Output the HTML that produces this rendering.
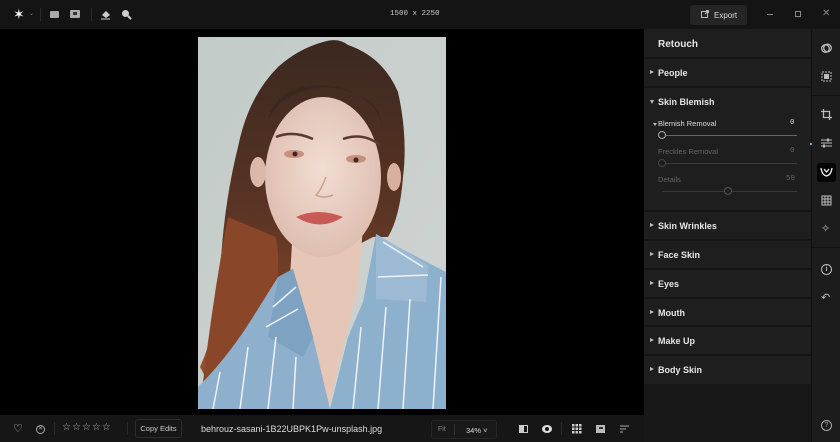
<!DOCTYPE html>
<html><head><meta charset="utf-8">
<style>
*{margin:0;padding:0;box-sizing:border-box}
body{width:840px;height:442px;background:#000;font-family:"Liberation Sans",sans-serif;position:relative;overflow:hidden;color:#ddd}
.top{position:absolute;left:0;top:0;width:840px;height:29px;background:#141414}
.bot{position:absolute;left:0;top:415px;width:644px;height:27px;background:#161616}
.panel{position:absolute;left:644px;top:29px;width:167px;height:413px;background:#181818}
.strip{position:absolute;left:811px;top:29px;width:29px;height:413px;background:#1c1c1c;border-left:1px solid #111}
.sec{position:absolute;left:0;width:167px;background:#1e1e1e;border-bottom:2px solid #151515}
.sec .t{position:absolute;left:14px;top:9px;font-size:9px;font-weight:bold;color:#e6e6e6}
.sec .a{position:absolute;left:6px;top:11px;width:0;height:0;border-left:4px solid #bbb;border-top:2.5px solid transparent;border-bottom:2.5px solid transparent}
.down{position:absolute;width:0;height:0;border-top:4px solid #bbb;border-left:2.5px solid transparent;border-right:2.5px solid transparent}
.lbl{position:absolute;font-size:7.5px}
.track{position:absolute;height:1px;background:#555}
.knob{position:absolute;width:8px;height:8px;border-radius:50%;border:1px solid #aaa;background:#1e1e1e}
.ic{position:absolute}
</style></head><body>
<div class="top">
 <div style="position:absolute;left:13px;top:7px;font-size:14px;color:#fff;line-height:14px">✶</div>
 <div style="position:absolute;left:29px;top:10px;font-size:6px;color:#888">⌄</div>
 <div style="position:absolute;left:40px;top:8px;width:1px;height:13px;background:#2a2a2a"></div>
 <div style="position:absolute;left:50px;top:11px;width:9px;height:7px;background:#aaa;border-radius:1px"></div>
 <div style="position:absolute;left:70px;top:10px;width:10px;height:8px;background:#aaa;border-radius:1px"><div style="position:absolute;left:3px;top:2px;width:4px;height:3px;background:#333"></div></div>
 <div style="position:absolute;left:91px;top:8px;width:1px;height:13px;background:#2a2a2a"></div>
 <svg class="ic" style="left:100px;top:9px" width="11" height="11"><path d="M2 6 L6 2 L10 6 L6 9 Z" fill="#ccc"/><path d="M1 10 H10" stroke="#ccc"/></svg>
 <svg class="ic" style="left:121px;top:9px" width="11" height="11"><circle cx="4.5" cy="4.5" r="3.5" fill="#ccc"/><path d="M7 7 L10 10" stroke="#ccc" stroke-width="2"/></svg>
 <div style="position:absolute;left:390px;top:10px;font-family:'Liberation Mono',monospace;font-size:7.5px;color:#ccc">1500 x 2250</div>
 <div style="position:absolute;left:690px;top:5px;width:57px;height:20px;background:#252525;border-radius:3px"></div>
 <svg class="ic" style="left:701px;top:10px" width="8" height="8"><rect x="0.5" y="1.5" width="6" height="6" fill="none" stroke="#bbb"/><path d="M4 4 L7.5 0.5 M5 0.5 H7.5 V3" stroke="#bbb" fill="none"/></svg>
 <div style="position:absolute;left:714px;top:11px;font-size:8px;color:#ddd">Export</div>
 <div style="position:absolute;left:767px;top:14px;width:6px;height:1px;background:#888"></div>
 <div style="position:absolute;left:795px;top:11px;width:6px;height:6px;border:1px solid #888"></div>
 <div style="position:absolute;left:822px;top:8px;font-size:10px;color:#888">✕</div>
</div>

<svg style="position:absolute;left:198px;top:37px" width="248" height="372" viewBox="0 0 248 372">
 <defs>
  <linearGradient id="bg" x1="0" y1="0" x2="1" y2="1"><stop offset="0" stop-color="#c2cbc8"/><stop offset="1" stop-color="#d0d4d2"/></linearGradient>
  <linearGradient id="hair" x1="0" y1="0" x2="0" y2="1"><stop offset="0" stop-color="#3a2820"/><stop offset="0.5" stop-color="#5a3424"/><stop offset="1" stop-color="#9a5030"/></linearGradient>
  <radialGradient id="skin" cx="0.5" cy="0.45" r="0.6"><stop offset="0" stop-color="#f2ddd2"/><stop offset="1" stop-color="#dcbcae"/></radialGradient>
 </defs>
 <rect width="248" height="372" fill="url(#bg)"/>
 <path d="M125 5 Q140 0 150 8 Q185 20 200 55 Q210 100 205 140 Q202 180 190 200 L175 200 L60 260 Q35 300 10 345 L2 330 Q20 290 22 240 Q25 170 40 110 Q50 60 80 30 Q100 12 125 5 Z" fill="url(#hair)"/>
 <path d="M30 180 Q15 260 5 345 Q40 320 70 280 Q85 240 78 200 Z" fill="#8a4628"/>
 <path d="M95 190 L92 240 L130 372 L160 250 L165 190 Z" fill="#e6c6b6"/>
 <ellipse cx="125" cy="140" rx="58" ry="80" fill="url(#skin)"/>
 <ellipse cx="60" cy="135" rx="8" ry="15" fill="#dcb8a8"/>
 <ellipse cx="196" cy="140" rx="7" ry="14" fill="#d8b0a0"/>
 <path d="M70 85 Q80 55 125 50 Q175 52 185 90 Q180 65 160 58 Q125 40 90 55 Q72 68 70 85Z" fill="#3a2820"/>
 <path d="M78 100 Q95 93 115 102" stroke="#5a3a30" stroke-width="2.5" fill="none"/>
 <path d="M145 102 Q165 95 182 108" stroke="#5a3a30" stroke-width="2.5" fill="none"/>
 <ellipse cx="96" cy="117" rx="10" ry="4" fill="#c8907e"/><circle cx="97" cy="117" r="2.5" fill="#3a2a22"/>
 <ellipse cx="158" cy="122" rx="10" ry="4" fill="#c8907e"/><circle cx="158" cy="123" r="2.5" fill="#3a2a22"/>
 <path d="M128 140 Q122 155 118 158 Q125 162 135 158" stroke="#c8a090" stroke-width="1.5" fill="none"/>
 <path d="M98 180 Q120 170 145 180 Q122 195 98 180Z" fill="#c85a58"/>
 <path d="M0 372 L0 350 Q30 320 55 280 L80 240 L95 232 L115 300 L132 372 Z" fill="#8fb0cc"/>
 <path d="M80 240 L95 232 L115 300 L105 320 L70 300 Z" fill="#7ea2c2"/>
 <path d="M132 372 L150 300 L165 265 L178 197 L200 210 L248 235 L248 372 Z" fill="#8db0cc"/>
 <path d="M178 197 L230 228 L228 265 L178 262 Z" fill="#9cbad4"/>
 <g stroke="#eef2f6" stroke-width="1.5" fill="none">
  <path d="M15 372 L22 335"/><path d="M42 372 L50 310"/><path d="M70 372 L78 300"/><path d="M95 372 L98 320"/><path d="M155 372 L163 290"/><path d="M180 372 L188 270"/><path d="M205 372 L212 262"/><path d="M235 372 L243 240"/><path d="M185 205 L225 230"/><path d="M180 240 L230 238"/><path d="M75 270 L98 250"/><path d="M68 290 L100 272"/>
 </g>
</svg>

<div class="bot">
 <div style="position:absolute;left:13px;top:7px;font-size:11px;color:#ccc">♡</div>
 <div style="position:absolute;left:36px;top:10px;width:9px;height:9px;border:1px solid #aaa;border-radius:50%;font-size:6px;line-height:7px;text-align:center;color:#aaa">✕</div>
 <div style="position:absolute;left:54px;top:7px;width:1px;height:13px;background:#2a2a2a"></div>
 <div style="position:absolute;left:62px;top:7px;font-size:10px;color:#bbb;letter-spacing:1px">☆☆☆☆☆</div>
 <div style="position:absolute;left:127px;top:7px;width:1px;height:13px;background:#2a2a2a"></div>
 <div style="position:absolute;left:135px;top:4px;width:47px;height:19px;border:1px solid #2e2e2e;border-radius:3px;font-size:7.5px;color:#ccc;text-align:center;line-height:17px">Copy Edits</div>
 <div style="position:absolute;left:201px;top:9px;font-size:9px;color:#ddd">behrouz-sasani-1B22UBPK1Pw-unsplash.jpg</div>
 <div style="position:absolute;left:431px;top:5px;width:66px;height:19px;border:1px solid #262626;border-radius:3px;background:#191919"></div>
 <div style="position:absolute;left:438px;top:11px;font-size:7px;color:#888">Fit</div>
 <div style="position:absolute;left:454px;top:9px;width:1px;height:11px;background:#333"></div>
 <div style="position:absolute;left:466px;top:11px;font-size:7.5px;color:#ddd">34% ˅</div>
 <div style="position:absolute;left:519px;top:10px;width:9px;height:8px;border:1px solid #ccc"><div style="width:4px;height:6px;background:#ccc"></div></div>
 <div style="position:absolute;left:542px;top:10px;width:10px;height:8px;background:#ddd;border-radius:50%"><div style="margin:2px auto;width:4px;height:4px;background:#161616;border-radius:50%"></div></div>
 <div style="position:absolute;left:561px;top:7px;width:1px;height:13px;background:#2a2a2a"></div>
 <svg class="ic" style="left:572px;top:9px" width="10" height="10"><g fill="#ccc"><rect x="0" y="0" width="2.5" height="2.5"/><rect x="3.5" y="0" width="2.5" height="2.5"/><rect x="7" y="0" width="2.5" height="2.5"/><rect x="0" y="3.5" width="2.5" height="2.5"/><rect x="3.5" y="3.5" width="2.5" height="2.5"/><rect x="7" y="3.5" width="2.5" height="2.5"/><rect x="0" y="7" width="2.5" height="2.5"/><rect x="3.5" y="7" width="2.5" height="2.5"/><rect x="7" y="7" width="2.5" height="2.5"/></g></svg>
 <div style="position:absolute;left:596px;top:10px;width:9px;height:8px;background:#bbb"><div style="margin:2px auto;width:4px;height:2px;background:#333"></div></div>
 <svg class="ic" style="left:620px;top:10px" width="10" height="8"><path d="M0 1 H9 M0 4 H6 M0 7 H3" stroke="#aaa"/></svg>
</div>

<div class="panel">
 <div class="sec" style="top:0;height:30px;background:#1e1e1e"><div class="t" style="top:10px;left:14px;font-size:10px">Retouch</div></div>
 <div class="sec" style="top:30px;height:29px"><div class="a"></div><div class="t">People</div></div>
 <div class="sec" style="top:59px;height:124px">
  <div class="down" style="left:6px;top:12px"></div><div class="t">Skin Blemish</div>
  <div class="down" style="left:9px;top:35px;border-top-width:3px;border-left-width:2px;border-right-width:2px"></div>
  <div class="lbl" style="left:14px;top:31px;color:#ddd">Blemish Removal</div>
  <div class="lbl" style="left:146px;top:31px;color:#ddd;font-family:'Liberation Mono',monospace">0</div>
  <div class="track" style="left:18px;top:47px;width:135px;background:#666"></div>
  <div class="knob" style="left:14px;top:43px"></div>
  <div class="lbl" style="left:14px;top:59px;color:#666">Freckles Removal</div>
  <div class="lbl" style="left:146px;top:59px;color:#666;font-family:'Liberation Mono',monospace">0</div>
  <div class="track" style="left:18px;top:75px;width:135px;background:#3a3a3a"></div>
  <div class="knob" style="left:14px;top:71px;border-color:#444"></div>
  <div class="lbl" style="left:14px;top:87px;color:#666">Details</div>
  <div class="lbl" style="left:142px;top:87px;color:#666;font-family:'Liberation Mono',monospace">50</div>
  <div class="track" style="left:18px;top:103px;width:135px;background:#3a3a3a"></div>
  <div class="knob" style="left:80px;top:99px;border-color:#555"></div>
 </div>
 <div class="sec" style="top:183px;height:29px"><div class="a"></div><div class="t">Skin Wrinkles</div></div>
 <div class="sec" style="top:212px;height:29px"><div class="a"></div><div class="t">Face Skin</div></div>
 <div class="sec" style="top:241px;height:29px"><div class="a"></div><div class="t">Eyes</div></div>
 <div class="sec" style="top:270px;height:28px"><div class="a"></div><div class="t">Mouth</div></div>
 <div class="sec" style="top:298px;height:29px"><div class="a"></div><div class="t">Make Up</div></div>
 <div class="sec" style="top:327px;height:28px;border-bottom:none"><div class="a"></div><div class="t">Body Skin</div></div>
</div>

<div class="strip">
 <svg class="ic" style="left:9px;top:14px" width="11" height="11"><circle cx="4.5" cy="5.5" r="3.8" fill="none" stroke="#bbb" stroke-width="1.3"/><circle cx="6.5" cy="5" r="3.8" fill="none" stroke="#bbb" stroke-width="1.3"/></svg>
 <svg class="ic" style="left:9px;top:42px" width="11" height="11"><rect x="1" y="1" width="9" height="9" fill="none" stroke="#bbb" stroke-dasharray="2 1"/><rect x="3" y="3" width="5" height="5" fill="#bbb"/></svg>
 <div style="position:absolute;left:0;top:66px;width:29px;height:1px;background:#111"></div>
 <svg class="ic" style="left:9px;top:80px" width="11" height="11"><path d="M2.5 0 V8.5 H11 M0 2.5 H8.5 V11" stroke="#bbb" stroke-width="1.3" fill="none"/></svg>
 <svg class="ic" style="left:9px;top:109px" width="11" height="10"><path d="M0 2 H11 M0 5 H11 M0 8 H11" stroke="#bbb"/><rect x="6" y="0.5" width="2" height="3" fill="#bbb"/><rect x="2" y="6.5" width="2" height="3" fill="#bbb"/></svg>
 <div style="position:absolute;left:-2px;top:114px;width:2px;height:2px;background:#5aa0e0"></div>
 <div style="position:absolute;left:5px;top:134px;width:19px;height:19px;background:#050505;border-radius:3px"></div>
 <svg class="ic" style="left:8px;top:137px" width="13" height="12"><path d="M1 2 Q2 9 6.5 10 Q11 9 12 2 M4 3 L6.5 6 L9 3" stroke="#eee" stroke-width="1.3" fill="none"/></svg>
 <svg class="ic" style="left:9px;top:166px" width="11" height="11"><rect x="1" y="1" width="9" height="9" fill="none" stroke="#bbb"/><path d="M1 4 H10 M1 7 H10 M4 1 V10 M7 1 V10" stroke="#bbb"/></svg>
 <div style="position:absolute;left:9px;top:193px;font-size:11px;color:#bbb">✧</div>
 <div style="position:absolute;left:0;top:218px;width:29px;height:1px;background:#111"></div>
 <div style="position:absolute;left:9px;top:235px;width:11px;height:11px;border:1px solid #bbb;border-radius:50%;font-size:7px;line-height:9px;text-align:center;color:#bbb;font-weight:bold">i</div>
 <div style="position:absolute;left:9px;top:262px;font-size:11px;color:#bbb">↶</div>
 <div style="position:absolute;left:9px;top:391px;width:11px;height:11px;border:1px solid #aaa;border-radius:50%;font-size:7px;line-height:9px;text-align:center;color:#aaa">?</div>
</div>
</body></html>
